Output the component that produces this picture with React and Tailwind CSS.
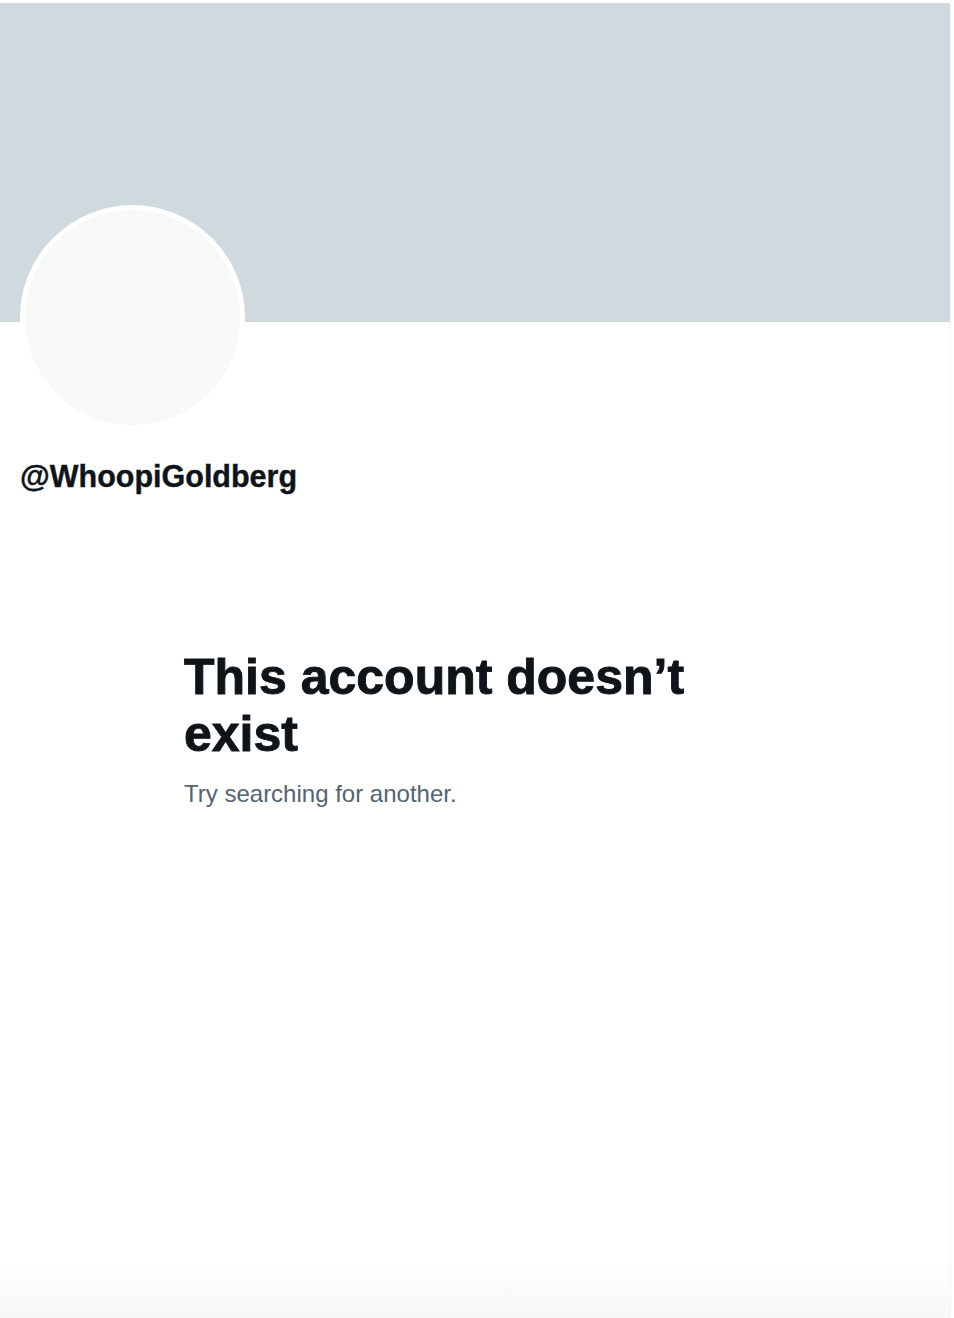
export default function App() {
  return (
    <div className="flex w-[954px] h-[1318px] bg-white" style={{ fontFamily: '"Liberation Sans", Arial, sans-serif' }}>
      <div className="flex flex-col w-[951px] h-full border-r border-[#eff3f4]">
        <div className="h-[3px] bg-white" />
        <div className="h-[319px] bg-[#cfd9de]" />
        <div className="ml-[20px] mt-[-117px] w-[225px] h-[225px] rounded-full border-[5px] border-white bg-[#f7f9f9]" />
        <div className="ml-[20px] mt-[28px] text-[30.5px] leading-[36px] font-bold text-[#0f1419] [-webkit-text-stroke:0.4px_#0f1419]">@WhoopiGoldberg</div>
        <div className="ml-[184px] mt-[155px] w-[540px]">
          <h1 className="text-[50px] leading-[57px] font-bold text-[#0f1419] [-webkit-text-stroke:0.9px_#0f1419]">This account doesn’t exist</h1>
          <p className="mt-[17px] text-[24px] leading-[28px] text-[#536471]">Try searching for another.</p>
        </div>
        <div className="flex-1" />
        <div className="h-[60px] bg-gradient-to-b from-white to-[#f7f7f7]" />
      </div>
    </div>
  );
}
